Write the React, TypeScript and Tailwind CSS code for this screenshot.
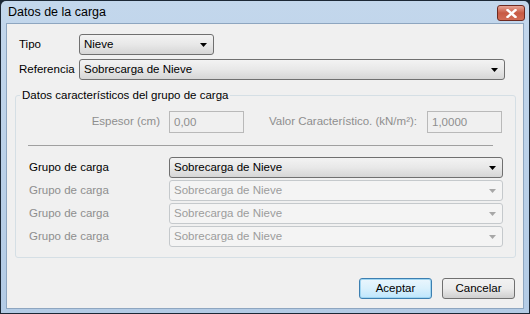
const font = { fontFamily: '"Liberation Sans", Arial, sans-serif' };

function Arrow({ disabled }: { disabled?: boolean }) {
  return (
    <svg width="7" height="4" viewBox="0 0 7 4" className="shrink-0">
      <path d="M0 0H7L3.5 4Z" fill={disabled ? "#a7a7a7" : "#000"} />
    </svg>
  );
}

function Combo({ value, width, disabled }: { value: string; width: string; disabled?: boolean }) {
  return (
    <div
      className={`${width} h-[21px] flex items-center justify-between pl-[4px] pr-[6px] rounded-[3px] border text-[11.5px] ${
        disabled
          ? "border-[#c5c9cc] bg-[#f4f4f4] text-[#9c9c9c]"
          : "border-[#707070] bg-gradient-to-b from-[#f3f3f3] via-[#e8e8e8] to-[#d6d6d6] text-black"
      }`}
    >
      <span>{value}</span>
      <Arrow disabled={disabled} />
    </div>
  );
}

function Field({ value }: { value: string }) {
  return (
    <div className="w-[75px] h-[22px] border border-[#b9b9b9] bg-[#f0f0f0] text-[#8e8e8e] text-[11.5px] pl-[4px] pt-[2px]">
      {value}
    </div>
  );
}

export default function App() {
  const grupos = [false, true, true, true];
  return (
    <div style={font} className="w-[530px] h-[314px] bg-[#1c2836] p-px">
      <div className="w-full h-full flex flex-col bg-gradient-to-b from-[#c3d7ec] to-[#b3cbe5] rounded-t-[5px]">
        {/* Title bar */}
        <div className="h-[22px] flex items-center justify-between pl-[7px] pr-[4px]">
          <span className="text-[12.5px] text-black">Datos de la carga</span>
          <div className="w-[28px] h-[16px] mt-[2px] rounded-[3px] border border-[#6d2a21] bg-gradient-to-b from-[#e8a596] via-[#c75a44] to-[#d26d56] flex items-center justify-center">
            <svg width="11" height="9" viewBox="0 0 11 9">
              <path d="M1.5 1L9.5 8M9.5 1L1.5 8" stroke="#fff" strokeWidth="2.4" strokeLinecap="square" />
            </svg>
          </div>
        </div>
        {/* Client area */}
        <div className="flex-1 mx-[5px] mb-[4px] border border-[#8ea6c0] bg-[#f0f0f0] text-[11.5px] text-black flex flex-col">
          <div className="flex items-center mt-[10px]">
            <span className="w-[60px] pl-[12px] box-content">Tipo</span>
            <Combo value="Nieve" width="w-[135px]" />
          </div>
          <div className="flex items-center mt-[4px]">
            <span className="w-[60px] pl-[12px] box-content">Referencia</span>
            <Combo value="Sobrecarga de Nieve" width="w-[426px]" />
          </div>

          {/* Group box */}
          <div className="relative mt-[15px] ml-[8px] w-[501px] h-[163px] border border-[#d5dfe5] rounded-[3px] flex flex-col">
            <span className="absolute -top-[9px] left-[4px] px-[2px] bg-[#f0f0f0] text-black">
              Datos característicos del grupo de carga
            </span>
            <div className="flex items-center mt-[15px] text-[#8e8e8e]">
              <span className="w-[144px] text-right pr-[9px] box-content">Espesor (cm)</span>
              <Field value="0,00" />
              <span className="w-[173px] text-right pr-[10px] box-content">Valor Característico. (kN/m²):</span>
              <Field value="1,0000" />
            </div>
            <div className="mt-[12px] ml-[12px] w-[465px] h-px bg-[#a0a0a0]" />
            <div className="flex flex-col gap-[2px] mt-[11px]">
              {grupos.map((disabled, i) => (
                <div key={i} className="flex items-center">
                  <span className={`w-[140px] pl-[13px] box-content ${disabled ? "text-[#8e8e8e]" : "text-black"}`}>
                    Grupo de carga
                  </span>
                  <Combo value="Sobrecarga de Nieve" width="w-[334px]" disabled={disabled} />
                </div>
              ))}
            </div>
          </div>

          {/* Buttons */}
          <div className="flex justify-end gap-[10px] mt-[20px] mr-[8px]">
            <div className="w-[73px] h-[21px] rounded-[3px] border border-[#3c7fb1] shadow-[inset_0_0_0_1px_#9fd5f1] bg-gradient-to-b from-[#eaf6fd] via-[#d9f0fc] to-[#bee6fd] flex items-center justify-center">
              Aceptar
            </div>
            <div className="w-[73px] h-[21px] rounded-[3px] border border-[#707070] bg-gradient-to-b from-[#f2f2f2] via-[#ebebeb] to-[#cfcfcf] flex items-center justify-center">
              Cancelar
            </div>
          </div>
        </div>
      </div>
    </div>
  );
}
